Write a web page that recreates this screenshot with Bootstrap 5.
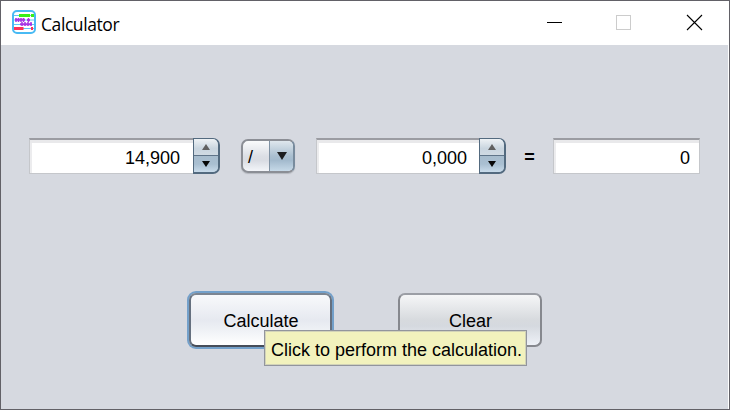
<!DOCTYPE html>
<html lang="en">
<head>
<meta charset="utf-8">
<meta name="viewport" content="width=device-width, initial-scale=1">
<title>Calculator</title>
<link href="https://cdn.jsdelivr.net/npm/bootstrap@5.3.0/dist/css/bootstrap.min.css" rel="stylesheet">
<style>
body{font-family:"Liberation Sans",Arial,sans-serif;font-size:18px;line-height:21px;color:#000}
.window{width:730px;height:410px;border:1px solid #626167;background:#fff}
.titlebar{height:44px;padding-left:11px}
.app-title{font-family:"Open Sans","Noto Sans",sans-serif;font-size:17.5px;letter-spacing:-.42px;margin-left:5px;line-height:24px;padding-top:1px}
.app-icon{margin-top:-2px}
.client{background:#d6d9e0;margin-right:1px;height:364px;padding-top:93px}
.calc-row{height:36px;padding-left:28px}
.field{height:36px;background:#fff;border:1px solid #c5c7cb;border-top:2px solid #9b9ca2;box-shadow:inset 0 3px 0 #e9e9eb,inset 2px 0 0 #ececee;padding-top:4px}
.spin-field{width:164px;border-right:0;padding-right:13px}
.spinner2 .spin-field{width:163px;padding-right:12px}
.result{width:147px;padding-right:9px}
.steps{width:27px;height:36px;border:1px solid #536a7f;border-width:1px 2px 2px 1px;border-radius:0 7px 7px 0;overflow:hidden;background:#c0d0de}
.steps span{flex:1}
.step-up{background:linear-gradient(#eef2f5,#c9d5df 60%,#d0dae3);border-bottom:1px solid #5f7489}
.step-down{background:linear-gradient(#a7bccd,#a9bfd1 50%,#c8dbea)}
.combo{width:54px;height:34px;margin:1px 21px 0;border:2px solid #8b8e95;border-radius:7px;overflow:hidden;background:linear-gradient(#fafbfc,#dcdfe5 50%,#d9dce3 65%,#f3f5f9);border-right-color:#788b9d;box-shadow:0 1px 1px #b4b7be}
.combo-value{width:26px;padding-left:5px;padding-top:3px}
.combo-arrow{border-left:1px solid #8092a4;background:linear-gradient(#dfe7ed,#aabfd0 50%,#a3bacd 65%,#c6d9e8)}
.equals{width:47px;height:36px;padding-top:3px;font-weight:bold}
.actions{margin-top:117px;padding-left:188px}
.push{height:54px;border:2px solid #86888e;border-top-color:#9b9ea5;border-radius:7px;padding:2px 0 0 1px;font-size:18px;line-height:21px;color:#000}
.push:hover{color:#000}
.calculate{width:143px;margin-top:2px;border-color:#7c8591 #65707f #464d59;background:linear-gradient(#f8f9fb,#e6e9f0 50%,#eceff4 65%,#fff);box-shadow:0 0 0 2px #73a0ca}
.calculate:hover{border-color:#7c8591 #65707f #464d59}
.clear{width:144px;margin-left:66px;margin-top:2px;background:linear-gradient(#f5f6f7,#d7dade 50%,#d5d9df 62%,#eef1f7)}
.hint{position:absolute;left:263px;top:285px;width:263px;height:36px;background:#f2f2bd;border:1px solid #92959d;box-shadow:inset 0 0 0 1px #d2d3b8;padding:4px 0 0 2px;white-space:nowrap}
</style>
<script src="https://cdn.jsdelivr.net/npm/bootstrap@5.3.0/dist/js/bootstrap.bundle.min.js"></script>
</head>
<body class="overflow-hidden">
<main class="window">
  <header class="titlebar d-flex align-items-center justify-content-between">
    <div class="d-flex align-items-center">
      <svg class="app-icon" width="24" height="24" viewBox="0 0 24 24" aria-hidden="true">
        <rect x="1" y="1" width="22" height="22" rx="4" fill="#fff" stroke="#48baf4" stroke-width="2"/>
        <path d="M2 5.5H22M2 10H22M2 14.5H22M2 18.5H22" stroke="#62c4f5"/>
        <path d="M7 5.5H18M19 5.5H22" stroke="#38ef18" stroke-width="3"/>
        <path d="M3 9.8H13M15 10H18M8 14.3H20" stroke="#a735e4" stroke-width="2"/>
        <path d="M4 8v4M6.5 8v4M9 8v4M11.5 8v4M16.5 8v4M10 12v4M13 12v4M16 12v4M19 12v4" stroke="#a735e4" stroke-width="1.5"/>
        <path d="M2 18.5H11.5M19 18.5H21" stroke="#fc3158" stroke-width="3"/>
      </svg>
      <div class="app-title">Calculator</div>
    </div>
    <svg width="183" height="44" viewBox="546 1 183 44" fill="none" aria-hidden="true">
      <path d="M547 22.5h15" stroke="#000"/>
      <rect x="616.5" y="15.5" width="14" height="14" stroke="#ccc"/>
      <path d="M687 15l15 15M702 15l-15 15" stroke="#000" stroke-width="1.1"/>
    </svg>
  </header>
  <section class="client position-relative">
    <div class="calc-row d-flex">
      <div class="d-flex">
        <div class="field spin-field d-flex align-items-center justify-content-end">14,900</div>
        <div class="steps d-flex flex-column">
          <span class="step-up d-flex align-items-center justify-content-center"><svg width="8" height="6"><path d="M4 0L8 6H0Z" fill="#606060"/></svg></span>
          <span class="step-down d-flex align-items-center justify-content-center"><svg width="8" height="6"><path d="M0 0H8L4 6Z" fill="#080808"/></svg></span>
        </div>
      </div>
      <div class="combo d-flex">
        <div class="combo-value d-flex align-items-center">/</div>
        <div class="combo-arrow flex-fill d-flex align-items-center justify-content-center"><svg width="10" height="9"><path d="M0 0H10L5 8Z" fill="#1c1d1f"/></svg></div>
      </div>
      <div class="spinner2 d-flex">
        <div class="field spin-field d-flex align-items-center justify-content-end">0,000</div>
        <div class="steps d-flex flex-column">
          <span class="step-up d-flex align-items-center justify-content-center"><svg width="8" height="6"><path d="M4 0L8 6H0Z" fill="#606060"/></svg></span>
          <span class="step-down d-flex align-items-center justify-content-center"><svg width="8" height="6"><path d="M0 0H8L4 6Z" fill="#080808"/></svg></span>
        </div>
      </div>
      <div class="equals d-flex align-items-center justify-content-center">=</div>
      <div class="field result d-flex align-items-center justify-content-end">0</div>
    </div>
    <div class="actions d-flex">
      <button type="button" class="btn push calculate">Calculate</button>
      <button type="button" class="btn push clear">Clear</button>
    </div>
    <div class="hint d-flex align-items-center justify-content-center" role="tooltip">Click to perform the calculation.</div>
  </section>
</main>
</body>
</html>
